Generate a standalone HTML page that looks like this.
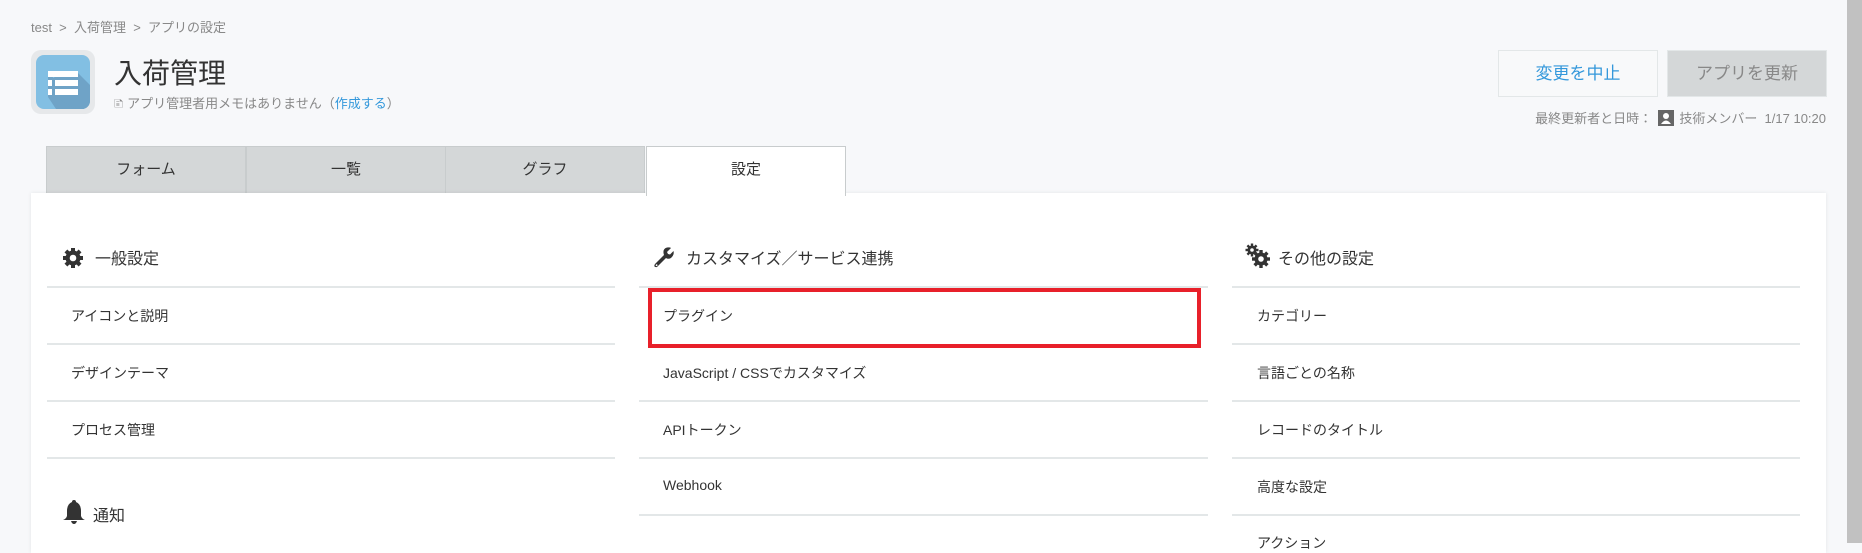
<!DOCTYPE html>
<html><head><meta charset="utf-8"><style>
*{margin:0;padding:0;box-sizing:border-box}
body{width:1862px;height:543px;overflow:hidden;background:#f7f8fa;font-family:"Liberation Sans","Noto Sans CJK JP",sans-serif;color:#333;position:relative}
.a{position:absolute;white-space:nowrap}
.bc{left:31px;top:17px;font-size:13px;color:#888}
.icon{left:31px;top:50px;width:64px;height:64px;border-radius:10px;background:#e6e8ea;}
.icon .in{position:absolute;left:5px;top:5px;width:54px;height:54px;border-radius:8px;background:#82bfe3;overflow:hidden}
.title{left:114px;top:52px;font-size:28px;color:#333}
.memo{left:114px;top:93px;font-size:13px;color:#888}
.memo span{color:#3498db}
.btn{top:50px;width:160px;height:47px;font-size:17px;text-align:center;line-height:45px;border:1px solid #e3e7e8}
.b1{left:1498px;background:#f8f9fa;color:#3498db}
.b2{left:1667px;background:#d4d7d8;color:#888}
.upd{right:36px;top:108px;font-size:13px;color:#888}
.av{display:inline-block;width:16px;height:16px;background:#666;vertical-align:-3px;margin:0 2px;position:relative}
.sb{left:1847px;top:0;width:15px;height:543px;background:#c1c1c1}
.tab{top:146px;width:200px;height:48px;background:#d4d7d8;border:1px solid #c8cccd;border-bottom:none;text-align:center;line-height:46px;font-size:15px;color:#333}
.panel{left:31px;top:193px;width:1795px;height:360px;background:#fff;box-shadow:0 0 4px rgba(0,0,0,.08)}
.col{top:0}
.h{font-size:16px;color:#333}
.line{height:2px;background:#e3e7e8}
.it{font-size:14px;color:#333}
</style></head><body>
<div class="a bc">test &nbsp;&gt;&nbsp; 入荷管理 &nbsp;&gt;&nbsp; アプリの設定</div>
<div class="a icon"><div class="in">
<svg width="54" height="54" viewBox="0 0 54 54"><polygon points="12,18 54,54 54,54 20,54 12,42" fill="#6fa3c7"/><polygon points="20,18 42,18 54,30 54,54 40,54 12,38" fill="#6fa3c7"/>
<rect x="12" y="16" width="30" height="6" fill="#fff"/><rect x="12" y="25" width="4" height="6" fill="#fff"/><rect x="19" y="25" width="23" height="6" fill="#fff"/><rect x="12" y="34" width="4" height="6" fill="#fff"/><rect x="19" y="34" width="23" height="6" fill="#fff"/></svg></div></div>
<div class="a title">入荷管理</div>
<div class="a memo">&#128456;&#xFE0E; アプリ管理者用メモはありません（<span>作成する</span>）</div>
<div class="a btn b1">変更を中止</div>
<div class="a btn b2">アプリを更新</div>
<div class="a upd">最終更新者と日時： <span class="av"><svg width="16" height="16"><circle cx="8" cy="6" r="3" fill="#fff"/><path d="M3 14 Q8 7 13 14Z" fill="#fff"/></svg></span> 技術メンバー&nbsp; 1/17 10:20</div>
<div class="a sb"></div>
<div class="a tab" style="left:46px">フォーム</div>
<div class="a tab" style="left:246px">一覧</div>
<div class="a tab" style="left:445px">グラフ</div>
<div class="a panel"></div>
<div class="a tab" style="left:646px;background:#fff;height:50px;z-index:2">設定</div>

<!-- column 1 -->
<svg class="a" style="left:62px;top:247px" width="22" height="22" viewBox="0 0 22 22"><g fill="#333"><circle cx="11" cy="11" r="7.5"/><rect x="9" y="1" width="4" height="20"/><rect x="1" y="9" width="20" height="4"/><rect x="9" y="1" width="4" height="20" transform="rotate(45 11 11)"/><rect x="9" y="1" width="4" height="20" transform="rotate(-45 11 11)"/></g><circle cx="11" cy="11" r="3.3" fill="#fff"/></svg>
<div class="a h" style="left:95px;top:245px">一般設定</div>
<div class="a line" style="left:47px;top:286px;width:568px"></div>
<div class="a it" style="left:71px;top:306px">アイコンと説明</div>
<div class="a line" style="left:47px;top:343px;width:568px"></div>
<div class="a it" style="left:71px;top:363px">デザインテーマ</div>
<div class="a line" style="left:47px;top:400px;width:568px"></div>
<div class="a it" style="left:71px;top:420px">プロセス管理</div>
<div class="a line" style="left:47px;top:457px;width:568px"></div>
<svg class="a" style="left:62px;top:499px" width="24" height="26" viewBox="0 0 24 26"><path d="M12 1 Q14 1 14 3 Q19 5 19 12 L19 17 Q20 20 23 21 L1 21 Q4 20 5 17 L5 12 Q5 5 10 3 Q10 1 12 1Z" fill="#333"/><path d="M9 22 L15 22 Q14 25 12 25 Q10 25 9 22Z" fill="#333"/></svg>
<div class="a h" style="left:93px;top:502px">通知</div>

<!-- column 2 -->
<svg class="a" style="left:653px;top:246px" width="22" height="22" viewBox="0 0 22 22"><path d="M2 18 L11 9 Q9 3 14 1.5 Q17 1 18 2 L14 6 L15 8 L17 8.5 L20.5 5 Q21.5 9 18 12 Q15 13.5 13 12 L4 21 Q2.5 21.5 1.5 20.5 Q1 19.5 2 18Z" fill="#333"/><circle cx="3.6" cy="19.2" r="0.9" fill="#fff"/></svg>
<div class="a h" style="left:686px;top:245px">カスタマイズ／サービス連携</div>
<div class="a line" style="left:639px;top:286px;width:569px"></div>
<div class="a" style="left:648px;top:288px;width:553px;height:60px;border:4px solid #e8202a"></div>
<div class="a it" style="left:663px;top:306px">プラグイン</div>
<div class="a it" style="left:663px;top:363px">JavaScript / CSSでカスタマイズ</div>
<div class="a line" style="left:639px;top:400px;width:569px"></div>
<div class="a it" style="left:663px;top:420px">APIトークン</div>
<div class="a line" style="left:639px;top:457px;width:569px"></div>
<div class="a it" style="left:663px;top:477px">Webhook</div>
<div class="a line" style="left:639px;top:514px;width:569px"></div>

<!-- column 3 -->
<svg class="a" style="left:1245px;top:243px" width="26" height="26" viewBox="0 0 26 26"><g fill="#333"><circle cx="7" cy="7" r="4.5"/><rect x="5.8" y="0.5" width="2.4" height="13"/><rect x="0.5" y="5.8" width="13" height="2.4"/><rect x="5.8" y="0.5" width="2.4" height="13" transform="rotate(45 7 7)"/><rect x="5.8" y="0.5" width="2.4" height="13" transform="rotate(-45 7 7)"/><circle cx="16" cy="16" r="6.5"/><rect x="14.3" y="7" width="3.4" height="18"/><rect x="7" y="14.3" width="18" height="3.4"/><rect x="14.3" y="7" width="3.4" height="18" transform="rotate(45 16 16)"/><rect x="14.3" y="7" width="3.4" height="18" transform="rotate(-45 16 16)"/></g><circle cx="7" cy="7" r="1.8" fill="#fff"/><circle cx="16" cy="16" r="2.8" fill="#fff"/></svg>
<div class="a h" style="left:1278px;top:245px">その他の設定</div>
<div class="a line" style="left:1232px;top:286px;width:568px"></div>
<div class="a it" style="left:1257px;top:306px">カテゴリー</div>
<div class="a line" style="left:1232px;top:343px;width:568px"></div>
<div class="a it" style="left:1257px;top:363px">言語ごとの名称</div>
<div class="a line" style="left:1232px;top:400px;width:568px"></div>
<div class="a it" style="left:1257px;top:420px">レコードのタイトル</div>
<div class="a line" style="left:1232px;top:457px;width:568px"></div>
<div class="a it" style="left:1257px;top:477px">高度な設定</div>
<div class="a line" style="left:1232px;top:514px;width:568px"></div>
<div class="a it" style="left:1257px;top:533px">アクション</div>
</body></html>
